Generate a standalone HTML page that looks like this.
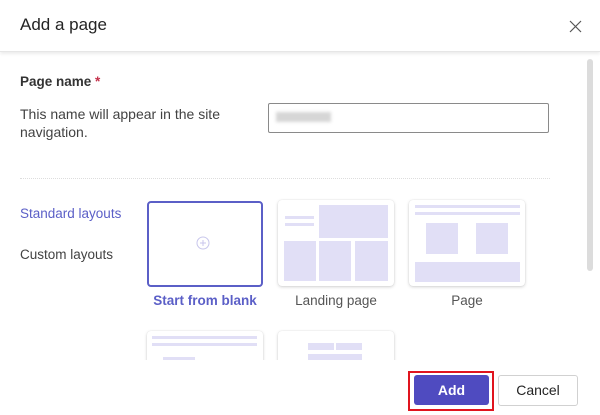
<!DOCTYPE html>
<html><head><style>
*{box-sizing:border-box;margin:0;padding:0}
body{width:600px;height:415px;background:#fff;font-family:"Liberation Sans",sans-serif;position:relative;overflow:hidden;color:#242424}
.a{position:absolute}
.card{position:absolute;width:116px;height:86px;background:#fff;border-radius:4px;box-shadow:0 1px 3px rgba(0,0,0,.18),0 0 1px rgba(0,0,0,.12)}
.f{position:absolute;background:#e1dff6}
</style></head><body>
<div class="a" style="left:0;top:0;width:600px;height:52px;border-bottom:1px solid #e6e6e6;box-shadow:0 2px 3px rgba(0,0,0,.08)"></div>
<div class="a" style="left:20px;top:15px;font-size:17px;color:#242424">Add a page</div>
<svg class="a" style="left:569px;top:20px" width="13" height="13" viewBox="0 0 13 13"><path d="M1 1L12 12M12 1L1 12" stroke="#555" stroke-width="1.2"/></svg>
<div class="a" style="left:587px;top:59px;width:6px;height:212px;background:#dcdcdc;border-radius:3px"></div>
<div class="a" style="left:20px;top:74px;font-size:13.5px;font-weight:bold;color:#333">Page name <span style="color:#c4314b">*</span></div>
<div class="a" style="left:20px;top:105px;font-size:14px;line-height:18px;color:#424242">This name will appear in the site<br>navigation.</div>
<div class="a" style="left:268px;top:103px;width:281px;height:30px;border:1px solid #8a8a8a;border-radius:2px"></div>
<div class="a" style="left:276px;top:112px;width:55px;height:10px;background:#d6d6d6;filter:blur(1.5px)"></div>
<div class="a" style="left:20px;top:178px;width:530px;border-top:1px dotted #ddd"></div>
<div class="a" style="left:20px;top:206px;font-size:13.5px;color:#5b5fc7">Standard layouts</div>
<div class="a" style="left:20px;top:247px;font-size:13.5px;color:#424242">Custom layouts</div>
<div class="a" style="left:147px;top:201px;width:116px;height:86px;border:2px solid #5b5fc7;border-radius:4px"></div>
<svg class="a" style="left:196px;top:236px" width="14" height="14" viewBox="0 0 14 14"><circle cx="7" cy="7" r="6" fill="none" stroke="#c8c6ec"/><path d="M7 4V10M4 7H10" stroke="#c8c6ec"/></svg>
<div class="a" style="left:147px;top:293px;width:116px;text-align:center;font-size:13.5px;font-weight:bold;color:#5b5fc7">Start from blank</div>
<div class="card" style="left:278px;top:200px"></div>
<div class="f" style="left:285px;top:216px;width:29px;height:3px"></div>
<div class="f" style="left:285px;top:223px;width:29px;height:3px"></div>
<div class="f" style="left:319px;top:205px;width:69px;height:33px"></div>
<div class="f" style="left:284px;top:241px;width:32px;height:40px"></div>
<div class="f" style="left:319px;top:241px;width:32px;height:40px"></div>
<div class="f" style="left:355px;top:241px;width:33px;height:40px"></div>
<div class="a" style="left:278px;top:293px;width:116px;text-align:center;font-size:13.5px;color:#555">Landing page</div>
<div class="card" style="left:409px;top:200px"></div>
<div class="f" style="left:415px;top:205px;width:105px;height:3px"></div>
<div class="f" style="left:415px;top:212px;width:105px;height:3px"></div>
<div class="f" style="left:426px;top:223px;width:32px;height:31px"></div>
<div class="f" style="left:476px;top:223px;width:32px;height:31px"></div>
<div class="f" style="left:415px;top:262px;width:105px;height:20px"></div>
<div class="a" style="left:409px;top:293px;width:116px;text-align:center;font-size:13.5px;color:#555">Page</div>
<div class="card" style="left:147px;top:331px;height:40px"></div>
<div class="f" style="left:152px;top:336px;width:105px;height:3px"></div>
<div class="f" style="left:152px;top:343px;width:105px;height:3px"></div>
<div class="f" style="left:163px;top:357px;width:32px;height:3px"></div>
<div class="card" style="left:278px;top:331px;height:40px"></div>
<div class="f" style="left:308px;top:343px;width:26px;height:7px"></div>
<div class="f" style="left:336px;top:343px;width:26px;height:7px"></div>
<div class="f" style="left:308px;top:354px;width:54px;height:7px"></div>
<div class="a" style="left:0;top:360px;width:600px;height:55px;background:#fff"></div>
<div class="a" style="left:408px;top:371px;width:86px;height:40px;border:2px solid #e0141e"></div>
<div class="a" style="left:414px;top:375px;width:75px;height:30px;background:#4f4bc0;border-radius:3px;color:#fff;font-weight:bold;font-size:14px;text-align:center;line-height:30px">Add</div>
<div class="a" style="left:498px;top:375px;width:80px;height:31px;border:1px solid #d1d1d1;border-radius:3px;color:#242424;font-size:14px;text-align:center;line-height:29px">Cancel</div>
</body></html>
